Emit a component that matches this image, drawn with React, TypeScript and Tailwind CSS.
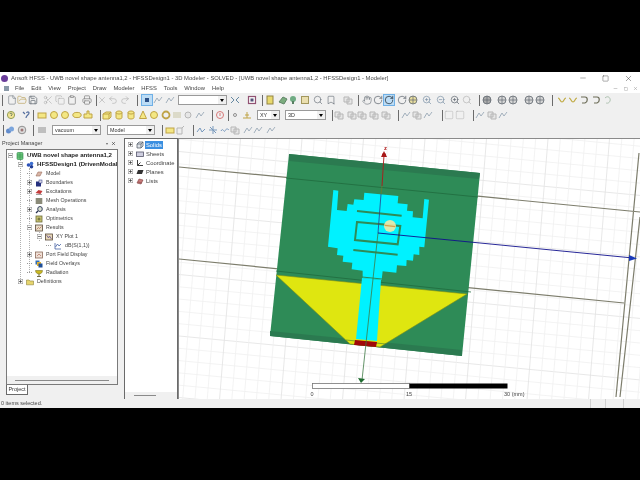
import { ReactNode } from "react";
import {
  Bookmark,
  Clipboard,
  Copy,
  File,
  FolderOpen,
  Hand,
  Minus,
  Printer,
  Redo2,
  RotateCw,
  Save,
  Scissors,
  Search,
  Square,
  Undo2,
  X,
  ZoomIn,
  ZoomOut,
} from "lucide-react";

// small toolbar cell, ml is passed as a full class so the offsets stay readable
function T({ ml, on, children }: { ml: string; on?: boolean; children: ReactNode }) {
  return (
    <span
      className={`${ml} flex h-[10px] w-[10px] shrink-0 items-center justify-center ${
        on ? "bg-[#bcdcf5] outline outline-1 outline-[#6fb0e6]" : "opacity-80"
      }`}
    >
      {children}
    </span>
  );
}

function Sep({ ml }: { ml: string }) {
  return <span className={`${ml} h-[11px] w-[1px] shrink-0 bg-[#6b6b6b]`} />;
}

function Combo({ ml, w, label }: { ml: string; w: string; label?: string }) {
  return (
    <span className={`${ml} ${w} flex h-[10px] shrink-0 items-center border border-[#9a9a9a] bg-white pl-[2px] text-[5.4px] text-[#333]`}>
      <span className="flex-1">{label}</span>
      <span className="flex h-full w-[8px] items-center justify-center bg-[#f0f0f0]">
        <span className="h-0 w-0 border-x-[2px] border-t-[3px] border-x-transparent border-t-black" />
      </span>
    </span>
  );
}

function Shape({ children }: { children: ReactNode }) {
  return (
    <svg viewBox="0 0 10 10" className="h-[10px] w-[10px]">
      {children}
    </svg>
  );
}

const yellow = { fill: "#f5e66a", stroke: "#b3901c", strokeWidth: 1 };
const grey = { fill: "#e4e4e4", stroke: "#a8a8a8", strokeWidth: 1 };
const gr = { size: 10, strokeWidth: 1.4, color: "#9a9a9a" };
const dk = { size: 10, strokeWidth: 1.8, color: "#3f4a55" };

const YRect = () => <Shape><rect x="1" y="3" width="8" height="5" {...yellow} /></Shape>;
const YCircle = () => <Shape><circle cx="5" cy="5" r="3.5" {...yellow} /></Shape>;
const YOval = () => <Shape><ellipse cx="5" cy="5" rx="4.2" ry="2.6" {...yellow} /></Shape>;
const YPoly = () => <Shape><path d="M1 8V4h3V1h2v3h3v4z" {...yellow} /></Shape>;
const YBox = () => <Shape><path d="M1 4l3-2h5v5l-2 2H1zM1 4h6v5M7 4l2-2" {...yellow} /></Shape>;
const YCyl = () => <Shape><path d="M2 2.5v5c0 2 6 2 6 0v-5c0-2-6-2-6 0c0 2 6 2 6 0" {...yellow} /></Shape>;
const YCone = () => <Shape><path d="M5 1L1.5 8.5h7z" {...yellow} /></Shape>;
const Wave = () => <Shape><path d="M1 3c2 0 2 4 4 4s2-4 4-4" fill="none" stroke="#b59a1a" strokeWidth="1.2" /></Shape>;
const Hook = () => <Shape><path d="M2 2h4c3 0 3 5 0 6H3" fill="none" stroke="#4a4a30" strokeWidth="1.2" /></Shape>;
const GBox = () => <Shape><path d="M1 2h5v5H1zM4 4h5v5H4z" {...grey} /></Shape>;
const GWire = () => <Shape><path d="M1 8l3-5 2 3 3-4" fill="none" stroke="#8fa0b0" strokeWidth="1" /></Shape>;
const Ball = ({ c }: { c: string }) => <Shape><circle cx="5" cy="5" r="4" fill={c} stroke="#3c4650" strokeWidth="0.8" /><path d="M1 5h8M5 1v8" stroke="#3c4650" strokeWidth="0.7" /></Shape>;

function Toolbar1() {
  return (
    <div className="flex h-[14px] items-center">
      <Sep ml="ml-[2px]" />
      <T ml="ml-[4px]"><File {...dk} strokeWidth={1.3} /></T>
      <T ml="ml-0"><FolderOpen size={10} strokeWidth={1.5} color="#a8892c" /></T>
      <T ml="ml-[1px]"><Save {...dk} /></T>
      <T ml="ml-[5px]"><Scissors {...gr} /></T>
      <T ml="ml-[2px]"><Copy {...gr} /></T>
      <T ml="ml-[2px]"><Clipboard {...dk} color="#6b6b6b" /></T>
      <T ml="ml-[5px]"><Printer {...dk} color="#6b6b6b" /></T>
      <Sep ml="ml-[4px]" />
      <T ml="ml-0"><X {...gr} /></T>
      <T ml="ml-[1px]"><Undo2 {...gr} /></T>
      <T ml="ml-[2px]"><Redo2 {...gr} /></T>
      <Sep ml="ml-[7px]" />
      <T ml="ml-[4px]" on><Shape><rect x="3" y="3" width="4" height="4" fill="#2b4f86" /></Shape></T>
      <T ml="ml-[1px]"><GWire /></T>
      <T ml="ml-[2px]"><GWire /></T>
      <Combo ml="ml-[3px]" w="w-[49px]" />
      <T ml="ml-[3px]"><Shape><path d="M1 2l3 3-3 3M9 2L6 5l3 3" fill="none" stroke="#44708f" strokeWidth="1" /></Shape></T>
      <T ml="ml-[7px]"><Shape><rect x="1.5" y="1.5" width="7" height="7" fill="#fff" stroke="#7a2b55" strokeWidth="1.2" /><path d="M3.5 3.5h3v3h-3z" fill="#2b2b5a" /></Shape></T>
      <Sep ml="ml-[5px]" />
      <T ml="ml-[2px]"><Shape><rect x="2" y="1" width="6" height="8" fill="#e7d44e" stroke="#7c6a18" /></Shape></T>
      <T ml="ml-[3px]"><Shape><path d="M1 7l4-5 4 2-3 5z" fill="#5e9c62" stroke="#3c6a44" /></Shape></T>
      <T ml="ml-0"><Shape><circle cx="5" cy="4" r="3" fill="#4f9a69" /><rect x="4" y="6" width="2" height="3" fill="#31643f" /></Shape></T>
      <T ml="ml-[2px]"><Shape><rect x="1.5" y="1.5" width="7" height="7" fill="#e9dca0" stroke="#8f8139" /></Shape></T>
      <T ml="ml-[3px]"><Search {...dk} strokeWidth={1.5} /></T>
      <T ml="ml-[3px]"><Bookmark {...dk} strokeWidth={1.5} /></T>
      <T ml="ml-[7px]"><GBox /></T>
      <Sep ml="ml-[5px]" />
      <T ml="ml-[3px]"><Hand {...dk} strokeWidth={1.4} /></T>
      <T ml="ml-[1px]"><RotateCw {...dk} /></T>
      <T ml="ml-[1px]" on><RotateCw {...dk} color="#22303e" /></T>
      <T ml="ml-[3px]"><RotateCw {...dk} /></T>
      <T ml="ml-[1px]"><Ball c="#e6d98a" /></T>
      <T ml="ml-[4px]"><ZoomIn size={10} strokeWidth={1.5} color="#4e6d8a" /></T>
      <T ml="ml-[4px]"><ZoomOut size={10} strokeWidth={1.5} color="#4e6d8a" /></T>
      <T ml="ml-[4px]"><ZoomIn size={10} strokeWidth={1.8} color="#3f4a55" /></T>
      <T ml="ml-[2px]"><Search {...gr} /></T>
      <Sep ml="ml-[7px]" />
      <T ml="ml-[2px]"><Ball c="#9a9a9a" /></T>
      <T ml="ml-[5px]"><Ball c="#cfcfcf" /></T>
      <T ml="ml-[1px]"><Ball c="#cfcfcf" /></T>
      <T ml="ml-[6px]"><Ball c="#cfcfcf" /></T>
      <T ml="ml-[1px]"><Ball c="#cfcfcf" /></T>
      <Sep ml="ml-[7px]" />
      <T ml="ml-[4px]"><Wave /></T>
      <T ml="ml-[1px]"><Wave /></T>
      <T ml="ml-[1px]"><Hook /></T>
      <T ml="ml-[2px]"><Hook /></T>
      <T ml="ml-[2px]"><Shape><path d="M2 3c3-3 6 0 5 3s-4 2-4 2" fill="none" stroke="#9db6a0" strokeWidth="1" /></Shape></T>
    </div>
  );
}

function Toolbar2() {
  return (
    <div className="mt-[1px] flex h-[14px] items-center">
      <Sep ml="ml-[3px]" />
      <T ml="ml-[2px]"><Shape><circle cx="5" cy="5" r="3.6" fill="#f4e27c" stroke="#7c8a35" /><path d="M4 4c0-1.500 2.500-1 2 .5L5 6" stroke="#3e5a3e" fill="none" /></Shape></T>
      <T ml="ml-[6px]"><Shape><path d="M1 2l2 2M4 8c0-3 3-3 3-5 0-1.500-2-1.500-2.500 0" stroke="#2e4f8c" strokeWidth="1.200" fill="none" /></Shape></T>
      <Sep ml="ml-[1px]" />
      <T ml="ml-[3px]"><YRect /></T>
      <T ml="ml-[2px]"><YCircle /></T>
      <T ml="ml-[1px]"><YCircle /></T>
      <T ml="ml-[2px]"><YOval /></T>
      <T ml="ml-[1px]"><YPoly /></T>
      <Sep ml="ml-[7px]" />
      <T ml="ml-[1px]"><YBox /></T>
      <T ml="ml-[2px]"><YCyl /></T>
      <T ml="ml-[2px]"><YCyl /></T>
      <T ml="ml-[2px]"><YCone /></T>
      <T ml="ml-[1px]"><YCircle /></T>
      <T ml="ml-[2px]"><Shape><circle cx="5" cy="5" r="3.500" fill="none" stroke="#b3901c" strokeWidth="1.800" /></Shape></T>
      <T ml="ml-[1px]"><Shape><path d="M1 3h8M1 5h8M1 7h8" stroke="#bdb98e" /></Shape></T>
      <T ml="ml-[1px]"><Shape><circle cx="5" cy="5" r="3" {...grey} /></Shape></T>
      <T ml="ml-[2px]"><GWire /></T>
      <Sep ml="ml-[7px]" />
      <T ml="ml-[2px]"><Shape><circle cx="5" cy="5" r="3.500" fill="none" stroke="#d05a5a" strokeWidth="1" /><path d="M5 3v3" stroke="#d05a5a" /></Shape></T>
      <Sep ml="ml-[3px]" />
      <T ml="ml-[1px]"><Shape><circle cx="5" cy="5" r="1.500" fill="none" stroke="#777" /></Shape></T>
      <T ml="ml-[2px]"><Shape><path d="M1 8h8M5 8V2M3 5h4" stroke="#b3901c" fill="none" /></Shape></T>
      <Combo ml="ml-[5px]" w="w-[23px]" label="XY" />
      <Combo ml="ml-[5px]" w="w-[41px]" label="3D" />
      <Sep ml="ml-[6px]" />
      <T ml="ml-[1px]"><GBox /></T>
      <T ml="ml-[3px]"><GBox /></T>
      <T ml="ml-0"><GBox /></T>
      <T ml="ml-[2px]"><GBox /></T>
      <T ml="ml-[2px]"><GBox /></T>
      <Sep ml="ml-[7px]" />
      <T ml="ml-[2px]"><GWire /></T>
      <T ml="ml-[1px]"><GBox /></T>
      <T ml="ml-[1px]"><GWire /></T>
      <Sep ml="ml-[9px]" />
      <T ml="ml-[1px]"><Square size={10} strokeWidth={1.2} color="#a0a0a0" /></T>
      <T ml="ml-[1px]"><Square size={10} strokeWidth={1.2} color="#a0a0a0" /></T>
      <Sep ml="ml-[8px]" />
      <T ml="ml-[1px]"><GWire /></T>
      <T ml="ml-[2px]"><GBox /></T>
      <T ml="ml-[1px]"><GWire /></T>
    </div>
  );
}

function Toolbar3() {
  return (
    <div className="mt-[1px] flex h-[14px] items-center">
      <Sep ml="ml-[3px]" />
      <T ml="ml-[1px]"><Shape><circle cx="3.500" cy="6" r="2.500" fill="#3f74c4" /><circle cx="6.500" cy="4" r="2.500" fill="#5f93d8" /></Shape></T>
      <T ml="ml-[2px]"><Shape><circle cx="5" cy="5" r="3.800" fill="#d8d8d8" stroke="#777" /><circle cx="5" cy="5" r="1.500" fill="#8a5a5a" /></Shape></T>
      <Sep ml="ml-[6px]" />
      <T ml="ml-[3px]"><Shape><path d="M1 3h8M1 5h8M1 7h8" stroke="#777" strokeWidth="1.200" /></Shape></T>
      <Combo ml="ml-[5px]" w="w-[49px]" label="vacuum" />
      <Combo ml="ml-[6px]" w="w-[48px]" label="Model" />
      <Sep ml="ml-[7px]" />
      <T ml="ml-[2px]"><YRect /></T>
      <T ml="ml-[1px]"><Shape><path d="M1 3h5v6H1zM6 3l2-2" fill="#eee" stroke="#a8a8a8" /></Shape></T>
      <Sep ml="ml-[7px]" />
      <T ml="ml-[2px]"><Shape><path d="M1 7l3-4 2 4 3-3" fill="none" stroke="#5a83b0" /></Shape></T>
      <T ml="ml-[2px]"><Shape><path d="M5 1v8M1 5h8M2 2l6 6" stroke="#5a83b0" /></Shape></T>
      <T ml="ml-[2px]"><Shape><path d="M1 6c2-4 3 2 4 0s2-3 4-1" fill="none" stroke="#5a83b0" /></Shape></T>
      <T ml="ml-0"><GBox /></T>
      <T ml="ml-[3px]"><GWire /></T>
      <T ml="ml-0"><GWire /></T>
      <T ml="ml-[3px]"><GWire /></T>
    </div>
  );
}

function TIcon({ children }: { children: ReactNode }) {
  return (
    <svg viewBox="0 0 8 8" className="ml-[3px] h-[8px] w-[8px] shrink-0">
      {children}
    </svg>
  );
}

type TreeRow = { label: string; pl: string; exp?: "+" | "-"; icon: ReactNode; bold?: boolean };

const treeRows: TreeRow[] = [
  { label: "UWB novel shape antenna1,2", pl: "pl-[1px]", exp: "-", bold: true, icon: <><rect x="1" y="0.500" width="6" height="7" rx="1" fill="#6cc77c" stroke="#2f8a4a" strokeWidth="0.600" /><path d="M1 3h6M1 5h6M4 .5v7" stroke="#2f8a4a" strokeWidth="0.500" /></> },
  { label: "HFSSDesign1 (DrivenModal", pl: "pl-[11px]", exp: "-", bold: true, icon: <><circle cx="2.500" cy="4" r="1.800" fill="#2d52b8" /><circle cx="5.500" cy="2.500" r="1.800" fill="#3c6fd0" /><circle cx="5.500" cy="5.700" r="1.800" fill="#1f3d96" /></> },
  { label: "Model", pl: "pl-[20px]", icon: <><path d="M1 6l2-4h4L5 6z" fill="#d9b5a5" stroke="#9a6f60" strokeWidth="0.600" /></> },
  { label: "Boundaries", pl: "pl-[20px]", exp: "+", icon: <><rect x="1" y="2.500" width="5" height="5" fill="#26307e" /><rect x="4" y="1" width="3" height="3" fill="#d8d8e8" stroke="#26307e" strokeWidth="0.500" /></> },
  { label: "Excitations", pl: "pl-[20px]", exp: "+", icon: <><path d="M.5 5l3-3 4 1-2 3z" fill="#c23b3b" /><path d="M1 6.500h6" stroke="#8a8a8a" strokeWidth="0.800" /></> },
  { label: "Mesh Operations", pl: "pl-[20px]", icon: <path d="M0.500 2h7M0.500 4h7M0.500 6h7M2 1v6M4 1v6M6 1v6" stroke="#4a4a2e" strokeWidth="0.800" /> },
  { label: "Analysis", pl: "pl-[20px]", exp: "+", icon: <><path d="M1 7l2-2" stroke="#26304e" strokeWidth="1.200" /><ellipse cx="5" cy="3" rx="2.300" ry="2.500" fill="#d8e0d0" stroke="#26304e" strokeWidth="0.900" /></> },
  { label: "Optimetrics", pl: "pl-[20px]", icon: <><rect x="1" y="1" width="6" height="6" fill="#c9c370" stroke="#6b6b3a" strokeWidth="0.800" /><circle cx="4" cy="4" r="1.500" fill="#7a7a44" /></> },
  { label: "Results", pl: "pl-[20px]", exp: "-", icon: <><rect x="0.500" y="1" width="7" height="6" fill="#eadfc8" stroke="#5a4a3a" strokeWidth="0.800" /><path d="M1.500 5.500l2-2 1 1 2-2" fill="none" stroke="#a04a3a" strokeWidth="0.600" /></> },
  { label: "XY Plot 1", pl: "pl-[30px]", exp: "-", icon: <><rect x="0.500" y="1" width="7" height="6" fill="#e8d8b8" stroke="#5a4a3a" strokeWidth="0.800" /><path d="M1.500 2l2 3 1-2 2 3" fill="none" stroke="#5a4a8a" strokeWidth="0.700" /></> },
  { label: "dB(S(1,1))", pl: "pl-[39px]", icon: <path d="M1 1v6h6M1.500 5l2-3 1.500 2 2-2" fill="none" stroke="#2f4f9a" strokeWidth="0.700" /> },
  { label: "Port Field Display", pl: "pl-[20px]", exp: "+", icon: <><rect x="0.500" y="1" width="7" height="6" fill="#efe0d6" stroke="#8a6a5a" strokeWidth="0.800" /><path d="M2 5l2-2 2 2" fill="none" stroke="#b06a5a" strokeWidth="0.700" /></> },
  { label: "Field Overlays", pl: "pl-[20px]", icon: <><rect x="0.500" y="0.500" width="4" height="4" fill="#2f6db5" /><rect x="2" y="2" width="4" height="4" fill="#e0b030" /><rect x="3.500" y="3.500" width="4" height="4" fill="#1f4f98" /></> },
  { label: "Radiation", pl: "pl-[20px]", icon: <><path d="M0.500 1.500h7C7.500 4 5.500 5 4 5S0.500 4 0.500 1.500z" fill="#c9b820" stroke="#6b6210" strokeWidth="0.500" /><path d="M4 5v2M2 7.500h4" stroke="#4a4410" strokeWidth="0.800" /></> },
  { label: "Definitions", pl: "pl-[11px]", exp: "+", icon: <path d="M0.500 6.800V2h2.500l1 1h3.500v3.800z" fill="#e6d56e" stroke="#8f8139" strokeWidth="0.600" /> },
];

function Expander({ sign }: { sign: "+" | "-" }) {
  return (
    <svg viewBox="0 0 5 5" className="relative h-[5px] w-[5px] shrink-0">
      <rect x="0.250" y="0.250" width="4.500" height="4.500" fill="#fff" stroke="#8a8a8a" strokeWidth="0.500" />
      <path d={sign === "+" ? "M1 2.500h3M2.500 1v3" : "M1 2.500h3"} stroke="#222" strokeWidth="0.600" />
    </svg>
  );
}

function ProjectTree() {
  return (
    <div className="relative flex-1 overflow-hidden pt-[1px]">
      <span className="absolute left-[13px] top-[9px] h-[122px] border-l border-dotted border-[#b0b0b0]" />
      <span className="absolute left-[22px] top-[18px] h-[104px] border-l border-dotted border-[#b0b0b0]" />
      <span className="absolute left-[32px] top-[82px] h-[9px] border-l border-dotted border-[#b0b0b0]" />
      {treeRows.map((row) => (
        <div key={row.label} className={`${row.pl} relative flex h-[9px] items-center whitespace-nowrap`}>
          {row.exp ? (
            <Expander sign={row.exp} />
          ) : (
            <span className="w-[5px] shrink-0 border-t border-dotted border-[#9a9a9a]" />
          )}
          <TIcon>{row.icon}</TIcon>
          <span className={`ml-[3px] leading-none ${row.bold ? "text-[6.100px] font-bold text-[#222]" : "text-[5.300px] text-[#444]"}`}>
            {row.label}
          </span>
        </div>
      ))}
    </div>
  );
}

const modelRows: { label: string; on?: boolean; icon: ReactNode }[] = [
  { label: "Solids", on: true, icon: <path d="M1 3l2-2h4v4L5 7H1zM1 3h4v4M5 3l2-2" fill="#dfe3e8" stroke="#4a5560" strokeWidth="0.700" /> },
  { label: "Sheets", icon: <rect x="0.500" y="2" width="7" height="4.500" fill="#cfcfe0" stroke="#55556a" strokeWidth="0.800" /> },
  { label: "Coordinate", icon: <path d="M1.500 1v5.500H7M1.500 6.500l3-3" fill="none" stroke="#2a2a2a" strokeWidth="0.900" /> },
  { label: "Planes", icon: <path d="M0.500 6l1.500-4h5.500L6 6z" fill="#333" /> },
  { label: "Lists", icon: <><path d="M1 6l2-4 4 1-2 4z" fill="#c77a7a" stroke="#7a3a3a" strokeWidth="0.600" /><path d="M2 5l4 1" stroke="#7a3a3a" strokeWidth="0.500" /></> },
];

const hLines = Array.from({ length: 26 }, (_, i) => 90 + i * 12.300);
const vLines = Array.from({ length: 42 }, (_, i) => 178 + i * 12.300);

const patch =
  "217,150 232,152 228,210 257,213 260,192 277,194 280,178 308,180 310,158 412,168 410,190 440,193 438,212 456,214 455,232 485,235 490,177 504,179 490,322 475,320 475,345 458,343 456,362 437,360 436,378 408,376 406,398 365,394 362,420 305,415 305,392 272,388 274,368 245,365 247,347 228,345 230,325 201,320";

function Viewport() {
  return (
    <div className="min-w-0 flex-1 border-l border-t border-[#8a8a8a] bg-white">
      <svg viewBox="178 139 462 260" className="block h-[260px] w-[462px]" fontFamily="'Liberation Sans', sans-serif">
        {hLines.map((y, i) => (
          <line key={y} x1="178" y1={y} x2="640" y2={y + 44} stroke={i % 5 === 0 ? "#e2e2e2" : "#f0f0f0"} strokeWidth="0.800" />
        ))}
        {vLines.map((x, i) => (
          <line key={x} x1={x} y1="139" x2={x - 21} y2="400" stroke={i % 5 === 0 ? "#e2e2e2" : "#f0f0f0"} strokeWidth="0.800" />
        ))}
        <path d="M178 167L639 212M178 259L623 303M638 153L615 397M639 217L619 397" fill="none" stroke="#7d7d6c" strokeWidth="1.200" />

        <polygon points="288,154 479,173 461,356 269,336" fill="#2e8b57" />
        <polygon points="288,154 479,173 478,179 288,161" fill="#2b7a50" />
        <polygon points="269,331 461,350 461,356 269,336" fill="#2b7a50" />
        <path d="M285 178L477 197M275 271L470 292" stroke="#1f6b3e" strokeWidth="0.800" fill="none" />
        <polygon points="275,275 466,294 379,347 349,344" fill="#dfe610" stroke="#7f8f18" strokeWidth="0.600" />
        <path d="M345 340L385 344" stroke="#3e7a30" strokeWidth="0.600" />

        <g transform="translate(260 140) scale(0.3333)">
          <polygon points={patch} fill="#00f2ff" />
          <path d="M288 213L422 227M277 330L410 344" stroke="#2e8b57" strokeWidth="6" fill="none" />
          <polygon points="288,246 418,258 410,313 282,300" fill="none" stroke="#2e8b57" strokeWidth="6" />
          <circle cx="387" cy="258" r="18" fill="#f1e9a8" opacity="0.900" />
          <path d="M371 256L403 260" stroke="#d9a04a" strokeWidth="4" />
        </g>
        <polygon points="361,278 380,280 376,341 355,339" fill="#00f2ff" />
        <path d="M361 277L381 279" stroke="#2e8b57" strokeWidth="1" />
        <polygon points="354,340 376,342 375,347 353,345" fill="#a00808" />

        <path d="M383 155L381 186" stroke="#b01818" strokeWidth="0.900" />
        <path d="M381 186L380 194" stroke="#6f7a30" strokeWidth="0.800" />
        <path d="M380 194L377 233" stroke="#2a3f8a" strokeWidth="0.800" />
        <path d="M377 233L361 380" stroke="#3f7a45" strokeWidth="0.800" />
        <path d="M377 233L632 258" stroke="#10108c" strokeWidth="0.900" />
        <path d="M383 151L386 157L380 157z" fill="#a81818" />
        <circle cx="383" cy="155" r="2" fill="#a81818" />
        <path d="M357 378L364 379L360 383z" fill="#1f6b30" />
        <path d="M628 255L636 258.500L628 261z" fill="#1838b8" />
        <text x="383" y="150" fontSize="6" fontWeight="bold" fill="#b01818">z</text>

        <rect x="311.500" y="383.500" width="97" height="5" fill="#fff" stroke="#777" strokeWidth="0.800" />
        <rect x="408.500" y="383.500" width="98" height="5" fill="#000" />
        <text x="309.500" y="396" fontSize="5.500" fill="#444">0</text>
        <text x="405" y="396" fontSize="5.500" fill="#444">15</text>
        <text x="503" y="396" fontSize="5.500" fill="#444">30 (mm)</text>
      </svg>
    </div>
  );
}

export default function App() {
  return (
    <div className="flex h-[480px] w-[640px] flex-col overflow-hidden bg-black font-['Liberation_Sans',sans-serif]">
      <div className="h-[72px] shrink-0" />
      <div className="flex h-[336px] shrink-0 flex-col bg-[#f0f0f0] blur-[0.3px]">
        {/* Title bar */}
        <div className="flex h-[12px] shrink-0 items-center bg-white">
          <span className="ml-[1px] h-[7px] w-[7px] rounded-full bg-[#6a3d9a]" />
          <span className="ml-[3px] flex-1 whitespace-nowrap text-[5.850px] text-[#4a4a4a]">
            Ansoft HFSS - UWB novel shape antenna1,2 - HFSSDesign1 - 3D Modeler - SOLVED - [UWB novel shape antenna1,2 - HFSSDesign1 - Modeler]
          </span>
          <Minus size={8} strokeWidth={1.2} color="#333" />
          <Square size={7} strokeWidth={1.4} color="#333" className="ml-[15px]" />
          <X size={9} strokeWidth={1.2} color="#333" className="ml-[15px] mr-[7px]" />
        </div>

        {/* Menu */}
        <div className="flex h-[9px] shrink-0 items-center bg-white text-[5.800px] text-[#444]">
          <span className="ml-[4px] h-[5px] w-[5px] bg-[#8a9aa8]" />
          <span className="ml-[6px]">File</span>
          <span className="ml-[7px]">Edit</span>
          <span className="ml-[7px]">View</span>
          <span className="ml-[7px]">Project</span>
          <span className="ml-[7px]">Draw</span>
          <span className="ml-[7px]">Modeler</span>
          <span className="ml-[7px]">HFSS</span>
          <span className="ml-[7px]">Tools</span>
          <span className="ml-[7px]">Window</span>
          <span className="ml-[7px] flex-1">Help</span>
          <Minus size={5} color="#888" />
          <Square size={4} color="#888" className="ml-[6px]" />
          <X size={5} color="#888" className="ml-[5px] mr-[2px]" />
        </div>

        <Toolbar1 />
        <Toolbar2 />
        <Toolbar3 />

        {/* Panels and modeler window */}
        <div className="mt-[1px] flex min-h-0 flex-1">
          <div className="flex w-[118px] shrink-0 flex-col">
            <div className="flex h-[11px] shrink-0 items-center pl-[2px] pr-[2px] text-[5.500px] text-[#444]">
              <span className="flex-1">Project Manager</span>
              <span className="h-0 w-0 border-x-[1.500px] border-t-[2px] border-x-transparent border-t-[#666]" />
              <X size={5} color="#222" strokeWidth={2.500} className="ml-[3px]" />
            </div>
            <div className="ml-[6px] flex h-[236px] shrink-0 flex-col border border-[#7a7a7a] bg-white">
              <ProjectTree />
              <div className="flex h-[8px] shrink-0 items-center bg-[#f0f0f0] px-[8px]">
                <span className="h-[1px] flex-1 bg-[#8a8a8a]" />
              </div>
            </div>
            <div className="ml-[6px] flex h-[10px] w-[22px] items-center justify-center border-x border-b border-[#6a6a6a] bg-white text-[5.500px] text-[#333]">
              Project
            </div>
          </div>

          <div className="ml-[6px] flex w-[54px] shrink-0 flex-col border-x border-t border-[#6a6a6a] bg-white">
            <div className="flex-1 pt-[1px]">
              {modelRows.map((row) => (
                <div key={row.label} className="flex h-[9px] items-center pl-[3px] text-[5.800px] text-[#444]">
                  <Expander sign="+" />
                  <TIcon>{row.icon}</TIcon>
                  <span className={`ml-[1px] px-[1px] leading-[8px] ${row.on ? "bg-[#3b8fe0] text-white" : ""}`}>{row.label}</span>
                </div>
              ))}
            </div>
            <div className="flex h-[7px] shrink-0 items-center bg-[#f0f0f0] pl-[9px] pr-[21px]">
              <span className="h-[1px] flex-1 bg-[#8a8a8a]" />
            </div>
          </div>

          <Viewport />
        </div>

        {/* Status bar */}
        <div className="flex h-[9px] shrink-0 items-center text-[5.500px] text-[#444]">
          <span className="ml-[1px] flex-1">0 items selected.</span>
          <span className="h-full w-[15px] border-l border-[#d0d0d0]" />
          <span className="h-full w-[18px] border-l border-[#d0d0d0]" />
          <span className="h-full w-[17px] border-l border-[#d0d0d0]" />
        </div>
      </div>
    </div>
  );
}
